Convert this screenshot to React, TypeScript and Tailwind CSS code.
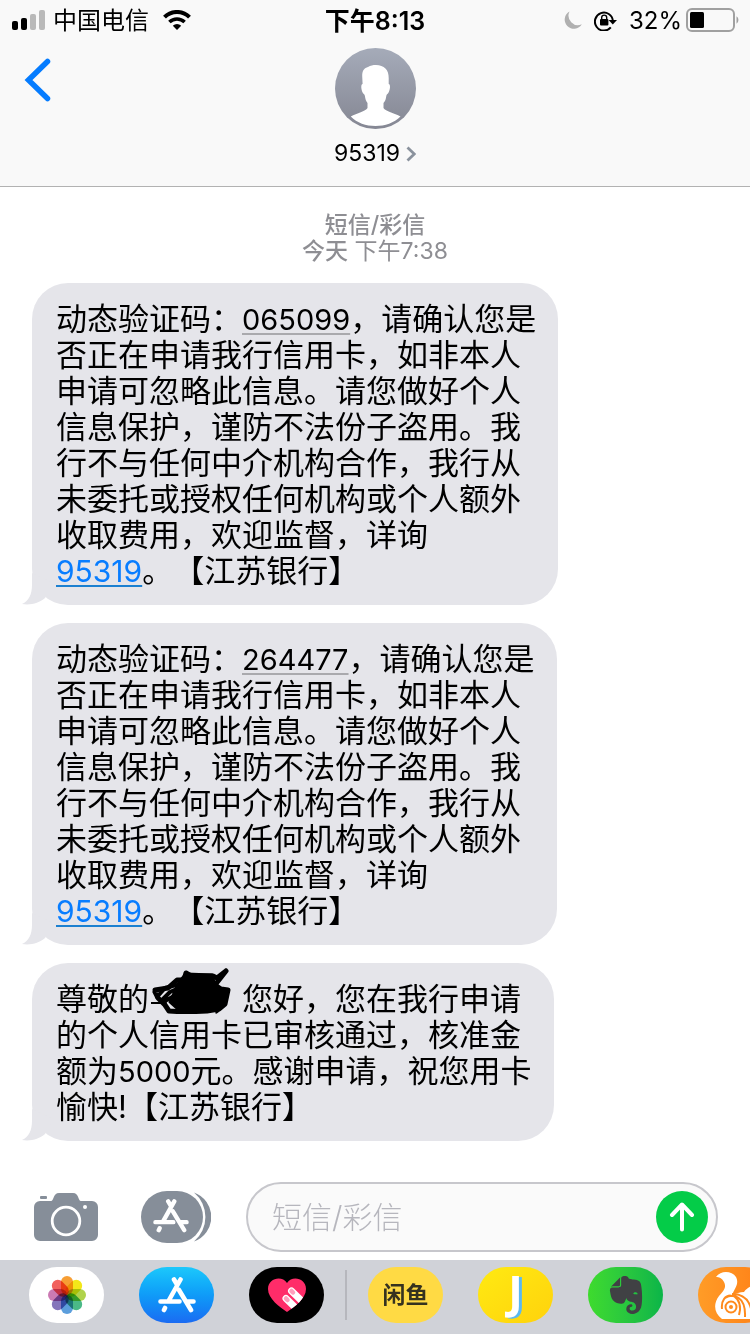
import type { ReactNode } from 'react'
import { SiEvernote } from 'react-icons/si'

const FONT = 'font-[Inter,"Noto_Sans_CJK_SC",sans-serif]'

function StatusBar() {
  return (
    <div className="grid h-10 grid-cols-3 items-center text-2xl">
      <div className="flex items-center pl-3">
        <svg viewBox="0 0 33 20" className="h-5 w-[33px]">
          <rect x="0" y="11" width="6" height="9" rx="2" />
          <rect x="9" y="8" width="6" height="12" rx="2" />
          <rect x="18" y="4" width="6" height="16" rx="2" fill="#b9b9b9" />
          <rect x="27" y="0" width="6" height="20" rx="2" fill="#b9b9b9" />
        </svg>
        <span className="ml-2 pt-0.5 leading-8">中国电信</span>
        <svg viewBox="0 0 28 20" className="ml-3.5 h-5 w-7">
          <path d="M1.500 7.200a17.500 17.500 0 0 1 25 0" fill="none" stroke="#000" strokeWidth="4" />
          <path d="M6.400 12a11 11 0 0 1 15.200 0" fill="none" stroke="#000" strokeWidth="3.600" />
          <path d="M14 20l-4.200-4.300a6 6 0 0 1 8.400 0z" />
        </svg>
      </div>
      <div className="pt-0.5 text-center text-[25px] leading-8 font-semibold">下午8:13</div>
      <div className="flex items-center justify-end pr-2.5">
        <svg viewBox="0 0 18 19" className="h-[19px] w-[18px]">
          <path d="M5.500 0.500a9.200 9.200 0 1 0 12.300 12.800A9.500 9.500 0 0 1 5.500 0.500z" fill="#b0b0b0" />
        </svg>
        <svg viewBox="0 0 23 21" className="ml-3 h-[21px] w-[23px]">
          <path d="M16.800 17.400a9 9 0 1 1 2.100-6.600" fill="none" stroke="#000" strokeWidth="2" />
          <path d="M14.600 10H23l-4.200 4.400z" />
          <rect x="6" y="9" width="8.400" height="6.500" rx="1" />
          <path d="M7.700 9.400V7.600a2.500 2.500 0 0 1 5 0v1.800" fill="none" stroke="#000" strokeWidth="1.400" />
        </svg>
        <span className="ml-3 pt-0.5 leading-8">32%</span>
        <svg viewBox="0 0 54 24" className="ml-1 h-6 w-[54px]">
          <rect x="1" y="1" width="47" height="22" rx="5" fill="none" stroke="#a0a0a0" strokeWidth="2" />
          <rect x="4" y="4" width="14" height="16" rx="1.500" />
          <path d="M50.500 8.300a4.500 4.500 0 0 1 0 7.400z" fill="#a0a0a0" />
        </svg>
      </div>
    </div>
  )
}

function Header() {
  return (
    <header className="h-[187px] border-b border-[#b2b2b2] bg-[#f9f9f9]">
      <StatusBar />
      <div className="grid grid-cols-3 items-start">
        <button aria-label="返回" className="ml-6 pt-4.5">
          <svg viewBox="0 0 28 44" className="h-11 w-7">
            <path d="M23.500 3.500L4.500 22l19 18.500" fill="none" stroke="#057cff" strokeWidth="5.500" strokeLinecap="round" />
          </svg>
        </button>
        <button className="flex flex-col items-center pt-2">
          <svg viewBox="0 0 81 81" className="size-[81px]">
            <defs>
              <linearGradient id="avatar" x1="0" y1="0" x2="0" y2="1">
                <stop offset="0" stopColor="#a5abb9" />
                <stop offset="1" stopColor="#858793" />
              </linearGradient>
            </defs>
            <circle cx="40.500" cy="40.500" r="40.500" fill="url(#avatar)" />
            <path
              d="M41 17c8 0 13 5 12.700 13v6c2 0 1.600 6-.4 9-.8 1.500-1.800 1-2 3-.4 3-1 5-2.800 7v5c2 3.500 11 5 17 8.500C59 75 50 78 40.500 78S22 75 15.800 68.500C22 65 30.500 63.500 32.500 60v-5c-1.500-2-2.200-4-2.600-7-.2-2-1.200-1.500-2-3-1.800-3-2.300-9-.3-9l-.4-8c0-6 2.300-8 5.800-9 2.500-1.500 5-2 8-2z"
              fill="#fff"
            />
          </svg>
          <span className="mt-2 flex items-center gap-1.5 text-[23px] leading-8">
            95319
            <svg viewBox="0 0 10 16" className="mt-0.5 h-4 w-2.5">
              <path d="M1.500 1.500L8.300 8l-6.800 6.500" fill="none" stroke="#8a929d" strokeWidth="2.800" />
            </svg>
          </span>
        </button>
      </div>
    </header>
  )
}

function Bubble({ lines }: { lines: ReactNode[] }) {
  return (
    <div className="relative w-fit rounded-[36px] bg-[#e5e5ea] pt-[18px] pr-[22px] pb-4 pl-6 text-[31px] leading-9 whitespace-nowrap">
      <svg viewBox="0 0 36 32" className="absolute bottom-0 -left-2.5 h-8 w-9" fill="#e5e5ea">
        <path d="M10 0v12c0 9-3 16-10 19 9 1.500 17-1 23-6L32 10z" />
      </svg>
      {lines.map((line, i) => (
        <p key={i} className="relative h-9">{line}</p>
      ))}
    </div>
  )
}

function Code({ children }: { children: ReactNode }) {
  return (
    <span className="text-[29px] leading-none underline decoration-[#a9a9ad] decoration-2 underline-offset-3 [text-decoration-skip-ink:none]">
      {children}
    </span>
  )
}

function PhoneLink() {
  return (
    <a
      href="tel:95319"
      className="text-[30px] leading-none text-[#087dff] underline decoration-[#1c80d0] decoration-2 underline-offset-3 [text-decoration-skip-ink:none]"
    >
      95319
    </a>
  )
}

// Name of the recipient, blacked out by hand
function Redacted() {
  return (
    <span className="relative inline-block w-[62px]">
      <svg viewBox="0 0 80 46" className="absolute -bottom-1 left-0.5 h-[46px] w-20">
        <g stroke="#000" strokeLinecap="round" strokeLinejoin="round">
          <path d="M4 22l13-2 9-8 7 0 2-7 5 3h22l4 2 9-7 M75 3l-11 14 6 4 7 1-3 14-6 5-12 2-22 1-16-1-4-6-7-7-3-6" fill="none" strokeWidth="5" />
          <path d="M28 14l7-8 26 1 4 14 11 2-2 12-12 7-33 1-10-9z" strokeWidth="3" />
          <path d="M6 29l8-9 11-3M11 32l8-8 9-4M14 33l11-6" fill="none" strokeWidth="4" />
          <path d="M0 35h15" strokeWidth="2" />
        </g>
      </svg>
    </span>
  )
}

const verification = (code: string): ReactNode[] => [
  <>动态验证码：<Code>{code}</Code>，请确认您是</>,
  '否正在申请我行信用卡，如非本人',
  '申请可忽略此信息。请您做好个人',
  '信息保护，谨防不法份子盗用。我',
  '行不与任何中介机构合作，我行从',
  '未委托或授权任何机构或个人额外',
  '收取费用，欢迎监督，详询',
  <><PhoneLink />。【江苏银行】</>,
]

const approval: ReactNode[] = [
  <>尊敬的<Redacted />，您好，您在我行申请</>,
  '的个人信用卡已审核通过，核准金',
  <>额为<span className="text-[29px] leading-none">5000</span>元。感谢申请，祝您用卡</>,
  '愉快!【江苏银行】',
]

function StoreMark({ className }: { className: string }) {
  return (
    <svg viewBox="0 0 38 36" className={className} fill="none" stroke="#fff" strokeWidth="4.600" strokeLinecap="round">
      <path d="M22.500 2.500L10.500 24M16 2.500l3 5M21 13l12 20M2.500 24.500h19M29 24.500h6.500M7 31l-1 2" />
    </svg>
  )
}

function Composer() {
  return (
    <div className="flex items-center pt-[41px] pr-8 pb-2 pl-[34px]">
      <button aria-label="相机" className="shrink-0">
        <svg viewBox="0 0 64 48" className="h-12 w-16">
          <path d="M6 8h11c3 0 2-8 8-8h14c6 0 5 8 8 8h11a6 6 0 0 1 6 6v28a6 6 0 0 1-6 6H6a6 6 0 0 1-6-6V14a6 6 0 0 1 6-6z" fill="#868e99" />
          <rect x="6" y="3" width="7" height="3" rx="1" fill="#868e99" />
          <circle cx="32" cy="28" r="13.800" fill="none" stroke="#fff" strokeWidth="2.800" />
          <circle cx="51" cy="14" r="2" fill="#fff" />
        </svg>
      </button>
      <button aria-label="应用" className="relative ml-[43px] shrink-0">
        <svg viewBox="0 0 70 52" className="h-[52px] w-[70px]" fill="#868e99">
          <rect width="62" height="52" rx="26" />
          <path d="M53 1.500a26 26 0 0 1 0 49 32 32 0 0 0 0-49z" />
        </svg>
        <StoreMark className="absolute top-2 left-3 h-[34px] w-9" />
      </button>
      <div className="ml-[35px] flex h-[70px] min-w-0 flex-1 items-center rounded-full border-2 border-[#c7c7cc] bg-[#fafafa] pr-2 pl-6">
        <input
          aria-label="短信/彩信"
          placeholder="短信/彩信"
          className="min-w-0 flex-1 bg-transparent text-[30px] outline-none placeholder:font-light placeholder:text-[#b6b6bd]"
        />
        <button aria-label="发送" className="flex size-[52px] shrink-0 items-center justify-center rounded-full bg-[#04cc48]">
          <svg viewBox="0 0 26 30" className="h-[30px] w-[26px]">
            <path d="M13 27.500V3M3 13L13 2.500 23 13" fill="none" stroke="#fff" strokeWidth="4" strokeLinecap="round" strokeLinejoin="round" />
          </svg>
        </button>
      </div>
    </div>
  )
}

function PhotosIcon() {
  const petals = ['#f7941d', '#f2e500', '#a8cf38', '#37b27a', '#4a94d8', '#7866b4', '#c66bab', '#f0504b']
  return (
    <svg viewBox="0 0 40 40" className="size-10">
      {petals.map((color, i) => (
        <rect key={color} x="14" y="1" width="12" height="19" rx="6" fill={color} transform={`rotate(${i * 45} 20 20)`} className="opacity-90 mix-blend-multiply" />
      ))}
    </svg>
  )
}

function HeartIcon() {
  return (
    <svg viewBox="0 0 40 36" className="h-9 w-10">
      <defs>
        <clipPath id="heart">
          <path d="M20 35C13 30 1 22 1 12 1 1 15-2 20 6 25-2 39 1 39 12c0 10-12 18-19 23z" />
        </clipPath>
      </defs>
      <g clipPath="url(#heart)">
        <rect width="40" height="36" fill="#ff2c69" />
        <path d="M19 21.500L36 38M24.500 14L42 31" stroke="#fff" strokeWidth="7" strokeLinecap="round" />
        <path d="M19 21.500l1.500 1.500M24.500 14l1.500 1.500" stroke="#ff9fbd" strokeWidth="4.500" strokeLinecap="round" />
      </g>
    </svg>
  )
}

function SquirrelIcon() {
  return (
    <svg viewBox="0 0 50 48" className="h-12 w-[50px]">
      <path d="M3 6C8-1 19 0 23 6c4 8-3 13-4 19 4-3 8-4 12-4 2-3 5-5 8-6l1-4 3 3 7 6v28H9C1 42 0 33 6 25c4-5 8-8 5-14-2-4-5-5-8-5z" fill="#fff" />
      <g fill="none" stroke="#ff8a1c" strokeWidth="2">
        <circle cx="18" cy="36" r="5.500" />
        <path d="M9 38c-2-18 19-18 18 1l-1 5M12 27c8-5 21-2 20 19M19 23c13 0 19 8 20 21" />
      </g>
      <circle cx="18" cy="36" r="2" fill="#ff8a1c" />
    </svg>
  )
}

const pill = 'flex h-14 w-[75px] shrink-0 items-center justify-center rounded-[28px]'

function Dock() {
  return (
    <nav className="flex h-[74px] items-center gap-[35px] overflow-hidden bg-[#d0d2d8] pb-1 pl-[29px]">
      <button aria-label="照片" className={`${pill} bg-white`}><PhotosIcon /></button>
      <button aria-label="App Store" className={`${pill} bg-linear-to-b from-[#1dc8fb] to-[#1b6bf2]`}>
        <StoreMark className="h-9 w-[38px]" />
      </button>
      <button aria-label="Digital Touch" className={`${pill} bg-black`}><HeartIcon /></button>
      <span className="-mx-3.5 h-[50px] w-0.5 shrink-0 bg-[#b6b7bd]" />
      <button className={`${pill} bg-[#ffda44] text-[23px] leading-none font-bold text-[#35321f]`}>闲鱼</button>
      <button className={`${pill} bg-linear-to-br from-[#ffea12] to-[#ffd20c] pb-2 font-["Open_Sans",sans-serif] text-[44px] leading-none font-bold text-white [text-shadow:3px_1px_0_#5bb8f2]`}>
        J
      </button>
      <button aria-label="Evernote" className={`${pill} bg-linear-to-r from-[#3edb2d] to-[#09b548]`}>
        <SiEvernote className="size-[38px] text-[#404144]" />
      </button>
      <button aria-label="UC" className={`${pill} justify-end bg-linear-to-r from-[#ff9c27] to-[#ff7c14] pr-2.5`}>
        <SquirrelIcon />
      </button>
    </nav>
  )
}

export default function App() {
  return (
    <div className={`flex min-h-screen flex-col bg-white text-black [text-spacing-trim:space-all] ${FONT}`}>
      <Header />
      <main className="flex-1 pt-[25px] pl-8">
        <div className="mb-[19px] pr-8 text-center text-[23px] leading-[26px] text-[#8e8e93]">
          <p className="font-medium">短信/彩信</p>
          <p><span className="font-medium">今天</span> 下午7:38</p>
        </div>
        <div className="flex flex-col gap-[18px]">
          <Bubble lines={verification('065099')} />
          <Bubble lines={verification('264477')} />
          <Bubble lines={approval} />
        </div>
      </main>
      <Composer />
      <Dock />
    </div>
  )
}
